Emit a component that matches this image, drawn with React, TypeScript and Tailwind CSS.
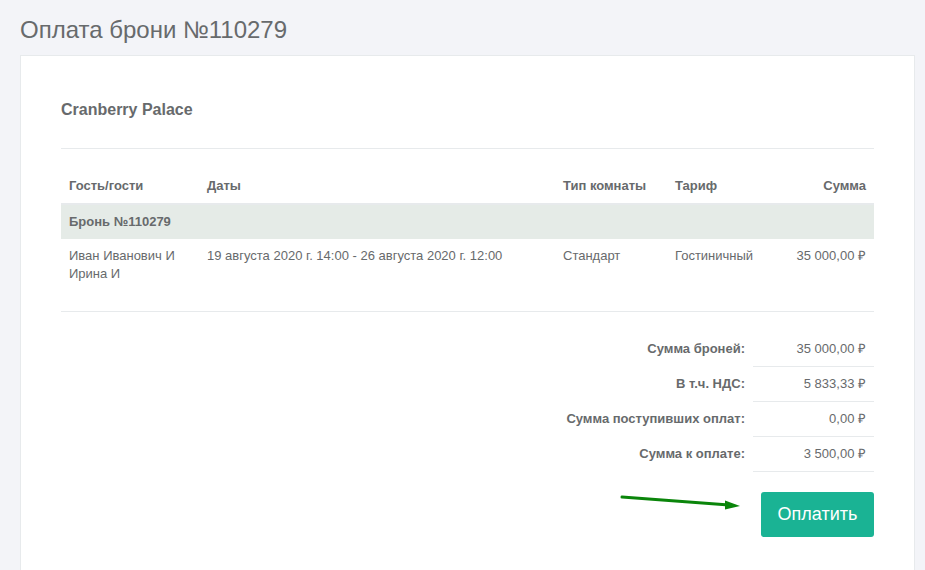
import React from 'react';

const font = { fontFamily: '"Liberation Sans", Arial, sans-serif' };

const summary = [
  { label: 'Сумма броней:', value: '35 000,00 ₽' },
  { label: 'В т.ч. НДС:', value: '5 833,33 ₽' },
  { label: 'Сумма поступивших оплат:', value: '0,00 ₽' },
  { label: 'Сумма к оплате:', value: '3 500,00 ₽' },
];

export default function App() {
  return (
    <div
      className="h-[570px] overflow-hidden bg-[#f3f4f8] pl-[20px] pr-[10px] pt-[16px] text-[13px] text-[#676a6c]"
      style={font}
    >
      <h2 className="text-[24px] leading-[28px] font-normal text-[#676a6c]">Оплата брони №110279</h2>

      <div className="mt-[11px] h-[560px] border border-[#e7eaec] bg-white px-[40px] pt-[44px]">
        <h3 className="text-[16px] leading-[20px] font-bold">Cranberry Palace</h3>
        <div className="mt-[28px] h-px bg-[#e7eaec]" />

        <table className="mt-[20px] w-full table-fixed border-collapse">
          <colgroup>
            <col className="w-[138px]" />
            <col className="w-[356px]" />
            <col className="w-[112px]" />
            <col className="w-[110px]" />
            <col />
          </colgroup>
          <thead>
            <tr className="border-b-2 border-[#e7eaec]">
              <th className="px-[8px] py-[8px] text-left font-bold leading-[18px]">Гость/гости</th>
              <th className="px-[8px] py-[8px] text-left font-bold leading-[18px]">Даты</th>
              <th className="px-[8px] py-[8px] text-left font-bold leading-[18px]">Тип комнаты</th>
              <th className="px-[8px] py-[8px] text-left font-bold leading-[18px]">Тариф</th>
              <th className="px-[8px] py-[8px] text-right font-bold leading-[18px]">Сумма</th>
            </tr>
          </thead>
          <tbody>
            <tr className="bg-[#e5ebe7]">
              <td colSpan={5} className="px-[8px] py-[8px] font-bold leading-[18px]">Бронь №110279</td>
            </tr>
            <tr>
              <td className="px-[8px] pt-[8px] pb-[8px] align-top leading-[18px]">
                Иван Иванович И<br />Ирина И
              </td>
              <td className="px-[8px] pt-[8px] align-top leading-[18px]">
                19 августа 2020 г. 14:00 - 26 августа 2020 г. 12:00
              </td>
              <td className="px-[8px] pt-[8px] align-top leading-[18px]">Стандарт</td>
              <td className="px-[8px] pt-[8px] align-top leading-[18px]">Гостиничный</td>
              <td className="px-[8px] pt-[8px] text-right align-top leading-[18px]">35 000,00 ₽</td>
            </tr>
          </tbody>
        </table>

        <div className="mt-[20px] h-px bg-[#e7eaec]" />

        <div className="mt-[20px] flex justify-end">
          <table className="border-collapse">
            <tbody>
              {summary.map((row) => (
                <tr key={row.label}>
                  <td className="px-[8px] py-[8px] text-right font-bold leading-[18px]">{row.label}</td>
                  <td className="w-[121px] border-b border-[#e7eaec] px-[8px] py-[8px] text-right leading-[18px]">
                    {row.value}
                  </td>
                </tr>
              ))}
            </tbody>
          </table>
        </div>

        <div className="mt-[20px] flex items-start justify-end">
          <svg width="124" height="20" viewBox="0 0 124 20" className="mr-[20px]">
            <line x1="5" y1="5" x2="112" y2="13" stroke="#0a850a" strokeWidth="3" strokeLinecap="round" />
            <polygon points="108,8.5 123,14 108,17.5" fill="#0a850a" />
          </svg>
          <button className="h-[45px] w-[113px] rounded-[3px] bg-[#1ab394] text-[18px] text-white" style={font}>
            Оплатить
          </button>
        </div>
      </div>
    </div>
  );
}
